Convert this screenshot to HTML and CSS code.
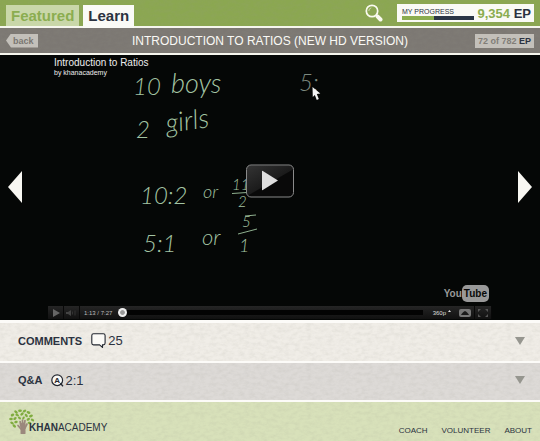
FILE: index.html
```html
<!DOCTYPE html>
<html lang="en">
<head>
<meta charset="utf-8">
<title>Introduction to Ratios</title>
<link rel="stylesheet" href="styles.css">
</head>
<body>
<header class="top paper">
  <nav class="tabs">
    <a class="tab" href="#featured">Featured</a>
    <a class="tab tab-active" href="#learn">Learn</a>
  </nav>
  <button class="search" aria-label="Search">
    <svg width="18" height="18" viewBox="0 0 18 18"><circle cx="7" cy="7" r="5.7" fill="none" stroke="#fafaf0" stroke-width="1.7"/><path d="M3.8 7a3.3 3.3 0 0 1 2.5-3.2" fill="none" stroke="#dce6c2" stroke-width=".8"/><path d="M11 11l1.4 1.4" stroke="#fafaf0" stroke-width="2"/><path d="M12.7 12.7l2.8 2.8" stroke="#fafaf0" stroke-width="4" stroke-linecap="round"/></svg>
  </button>
  <div class="progress">
    <div class="progress-track">
      <span class="progress-label">MY PROGRESS</span>
      <div class="bar"><div class="bar-fill"></div></div>
    </div>
    <div class="points">9,354 <b>EP</b></div>
  </div>
</header>
<div class="titlebar paper">
  <a class="back" href="#back">back</a>
  <h1>INTRODUCTION TO RATIOS (NEW HD VERSION)</h1>
  <div class="score">72 of 782 <b>EP</b></div>
</div>
<main>
  <section class="stage">
    <button class="arrow" aria-label="Previous video"><svg width="14" height="32" viewBox="0 0 14 32"><path d="M14 0v32L0 16z" fill="#f8f7f2"/></svg></button>
    <div class="player">
      <div class="screen">
        <svg class="board" viewBox="0 0 444 251">
          <g class="chalk">
            <text x="85" y="40">10</text>
            <text class="big" x="123" y="38">boys</text>
            <text class="dim" x="251" y="36">5:</text>
            <text x="88" y="83">2</text>
            <text class="big" x="119" y="78" transform="rotate(-8 119 78)">girls</text>
            <text x="92" y="149">10:2</text>
            <text class="small" x="155" y="143">or</text>
            <text class="fraction" x="184" y="135">11</text>
            <text class="fraction" x="190" y="152">2</text>
            <text x="95" y="197">5:1</text>
            <text class="mid" x="154" y="190">or</text>
            <text class="fraction" x="194" y="172">5</text>
            <text class="small" x="191" y="197">1</text>
            <path d="M184 138.500l15-1M190 179l19-5M197 161l11-1"/>
          </g>
          <path d="M264.500 32l.3 10 2-2 2 5 2-1-2-5 3.500-.5z" fill="#f4f4f4"/>
        </svg>
        <div class="caption"><strong>Introduction to Ratios</strong><small>by khanacademy</small></div>
        <button class="play" aria-label="Play"><svg width="16" height="20" viewBox="0 0 16 20"><path d="M0 0l16 10L0 20z" fill="#dedede"/></svg></button>
        <div class="youtube">You<span>Tube</span></div>
      </div>
      <div class="controls">
        <button class="control" aria-label="Play video"><svg width="8" height="8" viewBox="0 0 8 8"><path d="M1 0l7 4-7 4z" fill="#666"/></svg></button>
        <button class="control" aria-label="Volume"><svg width="11" height="8" viewBox="0 0 11 8"><path d="M0 3h2l3-2v6L2 5H0z" fill="#444"/><path d="M6.500 2.500v3M9 1.500v5" stroke="#333" fill="none"/></svg></button>
        <span class="time">1:13 / 7:27</span>
        <input class="seek" type="range" min="0" max="100" value="0" aria-label="Seek">
        <button class="quality">360p <svg width="3" height="7" viewBox="0 0 3 7"><path d="M0 3l1.500-2L3 3z" fill="#ddd"/></svg></button>
        <button class="popup" aria-label="Pop out"><svg width="8" height="4" viewBox="0 0 8 4"><path d="M0 4c1-2 2-3 4-4 2 1 3 2 4 4z" fill="#1a1a1a"/></svg></button>
        <button class="control full" aria-label="Full screen"><svg width="10" height="8" viewBox="0 0 10 8"><path d="M0 3V0h3zM7 0h3v3zM0 5v3h3zM7 8h3V5z" fill="#555"/></svg></button>
      </div>
    </div>
    <button class="arrow" aria-label="Next video"><svg width="14" height="32" viewBox="0 0 14 32"><path d="M0 0v32l14-16z" fill="#f8f7f2"/></svg></button>
  </section>
  <button class="row comments paper">
    <b>COMMENTS</b>
    <svg class="row-icon" width="15" height="15" viewBox="0 0 15 15"><path d="M2.500 .8h9.800q1.800 0 1.800 1.800v7.500q0 1.800-1.800 1.800h-.8v2.500l-3-2.500h-6Q.8 11.900.8 10.100V2.600Q.8.8 2.500.8z" fill="#fbfaf7" stroke="#232730" stroke-width="1.100"/></svg>
    <span class="count">25</span>
    <svg class="chevron" width="10" height="8" viewBox="0 0 10 8"><path d="M0 0h10L5 8z" fill="#96968f"/></svg>
  </button>
  <button class="row qa paper">
    <b>Q&amp;A</b>
    <svg class="row-icon" width="13" height="13" viewBox="0 0 13 13"><circle cx="6.200" cy="6.200" r="5.400" fill="#fbfaf7" stroke="#232730" stroke-width="1.200"/><path d="M9.300 9.300l2.700 3" stroke="#232730" stroke-width="1.300"/><text class="icon-letter" x="6.200" y="9.200" text-anchor="middle">A</text></svg>
    <span class="count">2:1</span>
    <svg class="chevron" width="10" height="8" viewBox="0 0 10 8"><path d="M0 0h10L5 8z" fill="#96968f"/></svg>
  </button>
</main>
<footer class="footer paper">
  <a class="logo" href="#home">
    <svg width="26" height="25" viewBox="0 0 26 25">
      <g fill="#7fac3f"><ellipse cx="7" cy="3" rx="2" ry="1.300" transform="rotate(35 7 3)"/><ellipse cx="11" cy="1.800" rx="1.900" ry="1.200"/><ellipse cx="15.500" cy="2" rx="1.900" ry="1.200" transform="rotate(-35 15.500 2)"/><ellipse cx="19.500" cy="3.500" rx="2" ry="1.200" transform="rotate(20 19.500 3.500)"/><ellipse cx="3.500" cy="6" rx="1.900" ry="1.300" transform="rotate(-30 3.500 6)"/><ellipse cx="8.200" cy="6" rx="1.900" ry="1.200" transform="rotate(25 8.200 6)"/><ellipse cx="13" cy="5" rx="2" ry="1.200" transform="rotate(-40 13 5)"/><ellipse cx="17.300" cy="6.500" rx="1.900" ry="1.200" transform="rotate(50 17.300 6.500)"/><ellipse cx="22" cy="7" rx="2" ry="1.300" transform="rotate(-20 22 7)"/><ellipse cx="2" cy="10" rx="1.800" ry="1.200"/><ellipse cx="6" cy="9.500" rx="1.900" ry="1.200" transform="rotate(-40 6 9.500)"/><ellipse cx="10.500" cy="9" rx="1.800" ry="1.200" transform="rotate(45 10.500 9)"/><ellipse cx="14.500" cy="9" rx="1.600" ry="1.100" transform="rotate(-60 14.500 9)"/><ellipse cx="19.300" cy="10.300" rx="1.900" ry="1.200" transform="rotate(-35 19.300 10.300)"/><ellipse cx="23.500" cy="11" rx="1.800" ry="1.200" transform="rotate(30 23.500 11)"/><ellipse cx="3" cy="14" rx="1.900" ry="1.200" transform="rotate(30 3 14)"/><ellipse cx="7" cy="13" rx="1.800" ry="1.200" transform="rotate(-20 7 13)"/><ellipse cx="20.500" cy="14" rx="1.900" ry="1.200" transform="rotate(20 20.500 14)"/><ellipse cx="5.300" cy="17" rx="2" ry="1.200" transform="rotate(40 5.300 17)"/></g>
      <g fill="none" stroke="#9b887d" stroke-linecap="round"><path d="M14 24v-8" stroke-width="5"/><path d="M11.800 17l-.7-4.500M13.500 16v-5M15.300 16l.7-4.500M16 19l2-4M12 20l-3-3.500" stroke-width="1.700"/></g>
    </svg>
    <span class="wordmark"><b>KHAN</b>ACADEMY</span>
  </a>
  <nav class="links"><a href="#coach">COACH</a><a href="#volunteer">VOLUNTEER</a><a href="#about">ABOUT</a></nav>
</footer>
</body>
</html>
```
FILE: styles.css
```css
* { box-sizing: border-box; }
body {
  margin: 0;
  min-height: 100vh;
  display: flex;
  flex-direction: column;
  background: #faf9f5;
  color: #2b3240;
  font-family: "Liberation Sans", Arial, sans-serif;
}
a { color: inherit; text-decoration: none; }
button {
  padding: 0;
  border: 0;
  background: none;
  color: inherit;
  font: inherit;
}
svg { display: block; flex: none; }
.paper {
  background-image: url("data:image/svg+xml,%3Csvg xmlns='http://www.w3.org/2000/svg' width='200' height='200'%3E%3Cfilter id='n'%3E%3CfeTurbulence type='fractalNoise' baseFrequency='.18 .3' numOctaves='3' stitchTiles='stitch'/%3E%3CfeColorMatrix values='0 0 0 0 .3 0 0 0 0 .3 0 0 0 0 .25 .25 0 0 0 -.09'/%3E%3C/filter%3E%3Crect width='200' height='200' filter='url(%23n)'/%3E%3C/svg%3E");
}
.top {
  display: flex;
  align-items: flex-end;
  height: 28px;
  padding: 0 6px;
  background-color: #8ba751;
  border-bottom: 2px solid #f6f6ee;
}
.tabs { display: flex; gap: 4px; margin-right: auto; }
.tab {
  height: 21px;
  padding: 0 5px;
  background: #c9d7a9;
  color: #8bad50;
  font-size: 15px;
  font-weight: bold;
  line-height: 21px;
}
.tab-active { margin-bottom: -2px; background: #fafaf6; color: #2b3240; height: 23px; }
.search { margin: 0 14px 4px 0; }
.progress {
  display: flex;
  align-items: center;
  justify-content: space-between;
  width: 137px;
  height: 18px;
  margin-bottom: 4px;
  padding: 0 3px 0 5px;
  background: #fafaf6;
}
.progress-track { width: 72px; }
.progress-label { display: block; font-size: 7px; line-height: 9px; }
.bar { height: 4px; background: #2b3646; }
.bar-fill { width: 45%; height: 100%; background: #8bad50; }
.points { color: #8bad50; font-size: 13px; font-weight: bold; white-space: nowrap; }
.points b, .score b { color: #2b3240; }
.titlebar {
  display: grid;
  grid-template-columns: 60px 1fr 60px;
  align-items: center;
  height: 27px;
  padding: 0 6px;
  background-color: #7c7873;
  border-bottom: 2px solid #f6f6ee;
}
h1 {
  margin: 0;
  color: #faf9f5;
  font-size: 12px;
  font-weight: normal;
  text-align: center;
  white-space: nowrap;
}
.back {
  width: 32px;
  height: 14px;
  padding-left: 7px;
  background: #c3c0ba;
  clip-path: polygon(0 50%, 5px 0, 100% 0, 100% 100%, 5px 100%);
  color: #7a7772;
  font-size: 9px;
  font-weight: bold;
  line-height: 14px;
}
.score {
  justify-self: end;
  width: 59px;
  height: 14px;
  background: #c3c0ba;
  color: #817e78;
  font-size: 9px;
  font-weight: bold;
  line-height: 15px;
  text-align: center;
  white-space: nowrap;
}
.stage {
  display: grid;
  grid-template-columns: 48px 1fr 48px;
  background: #050706;
  border-bottom: 1px solid #050706;
}
.arrow { display: grid; place-items: center start; padding-left: 8px; }
.arrow:last-child { place-items: center end; padding: 0 8px 0 0; }
.screen { position: relative; }
.board { width: 100%; height: auto; }
.chalk text { fill: #a3c4a3; font-family: Lato, sans-serif; font-size: 24px; font-weight: 300; font-style: italic; }
.chalk .big { font-size: 27px; }
.chalk .mid { font-size: 22px; }
.chalk .small { font-size: 18px; }
.chalk .fraction { font-size: 15px; }
.chalk .dim { fill: #7c887e; }
.chalk path { fill: none; stroke: #8fb08f; }
.caption { position: absolute; top: 2px; left: 6px; color: #eee; }
.caption strong { display: block; font-size: 10px; font-weight: normal; line-height: 12px; }
.caption small { display: block; font-size: 7px; line-height: 7px; }
.play {
  position: absolute;
  top: 50%;
  left: 50%;
  display: grid;
  place-items: center;
  width: 48px;
  height: 33px;
  transform: translate(-50%, -50%);
  border: 1px solid #8a8a8a;
  border-radius: 5px;
  background: linear-gradient(150deg, #343434 0%, #1b1b1b 52%, #090909 54%);
}
.youtube {
  position: absolute;
  right: 3px;
  bottom: 4px;
  display: flex;
  align-items: center;
  color: #999;
  font: bold 10px/17px "Liberation Sans", Arial, sans-serif;
}
.youtube span { padding: 0 2px; border-radius: 5px; background: #999; color: #090909; }
.controls {
  display: flex;
  align-items: center;
  height: 13px;
  background: linear-gradient(#252525, #111);
  color: #bbb;
  font-size: 6px;
}
.control { display: grid; place-items: center; width: 16px; height: 13px; border-right: 1px solid #080808; }
.time { margin: 0 6px 0 4px; white-space: nowrap; }
.seek {
  flex: 1;
  min-width: 0;
  height: 9px;
  margin: 0 10px 0 0;
  appearance: none;
  background: linear-gradient(#0000 2px, #030303 2px 7px, #0000 7px);
}
.seek::-webkit-slider-thumb { appearance: none; width: 9px; height: 9px; border-radius: 50%; background: radial-gradient(#999 30%, #eee 45%); }
.quality { display: flex; align-items: center; gap: 2px; margin-right: 8px; color: #ddd; }
.popup { display: grid; place-items: center; width: 12px; height: 8px; margin-right: 3px; border-radius: 2px; background: #777; }
.full { width: 18px; border-left: 1px solid #080808; }
.row {
  display: flex;
  align-items: center;
  width: 100%;
  height: 40px;
  padding: 0 15px 3px 18px;
  border-top: 2px solid #fcfbf8;
  font-size: 11px;
  text-align: left;
}
.comments { height: 41px; border-top-width: 3px; background-color: #f0ede7; }
.qa { height: 39px; background-color: #dddad7; }
.row-icon { margin-left: 9px; }
.comments .count { margin-left: 2px; }
.count { margin-left: 1px; font-size: 13px; }
.chevron { margin-left: auto; }
.icon-letter { font: bold 8px "Liberation Sans", sans-serif; fill: #232730; }
.footer {
  flex: 1;
  display: flex;
  align-items: flex-end;
  justify-content: space-between;
  min-height: 41px;
  padding: 0 8px 5px 9px;
  border-top: 2px solid #fcfbf8;
  background-color: #d8e1ba;
}
.logo { display: flex; align-items: flex-end; margin-bottom: 2px; }
.wordmark { margin-left: -6px; font-size: 10px; line-height: 12px; }
.links { display: flex; gap: 14px; font-size: 8px; line-height: 11px; }
```
